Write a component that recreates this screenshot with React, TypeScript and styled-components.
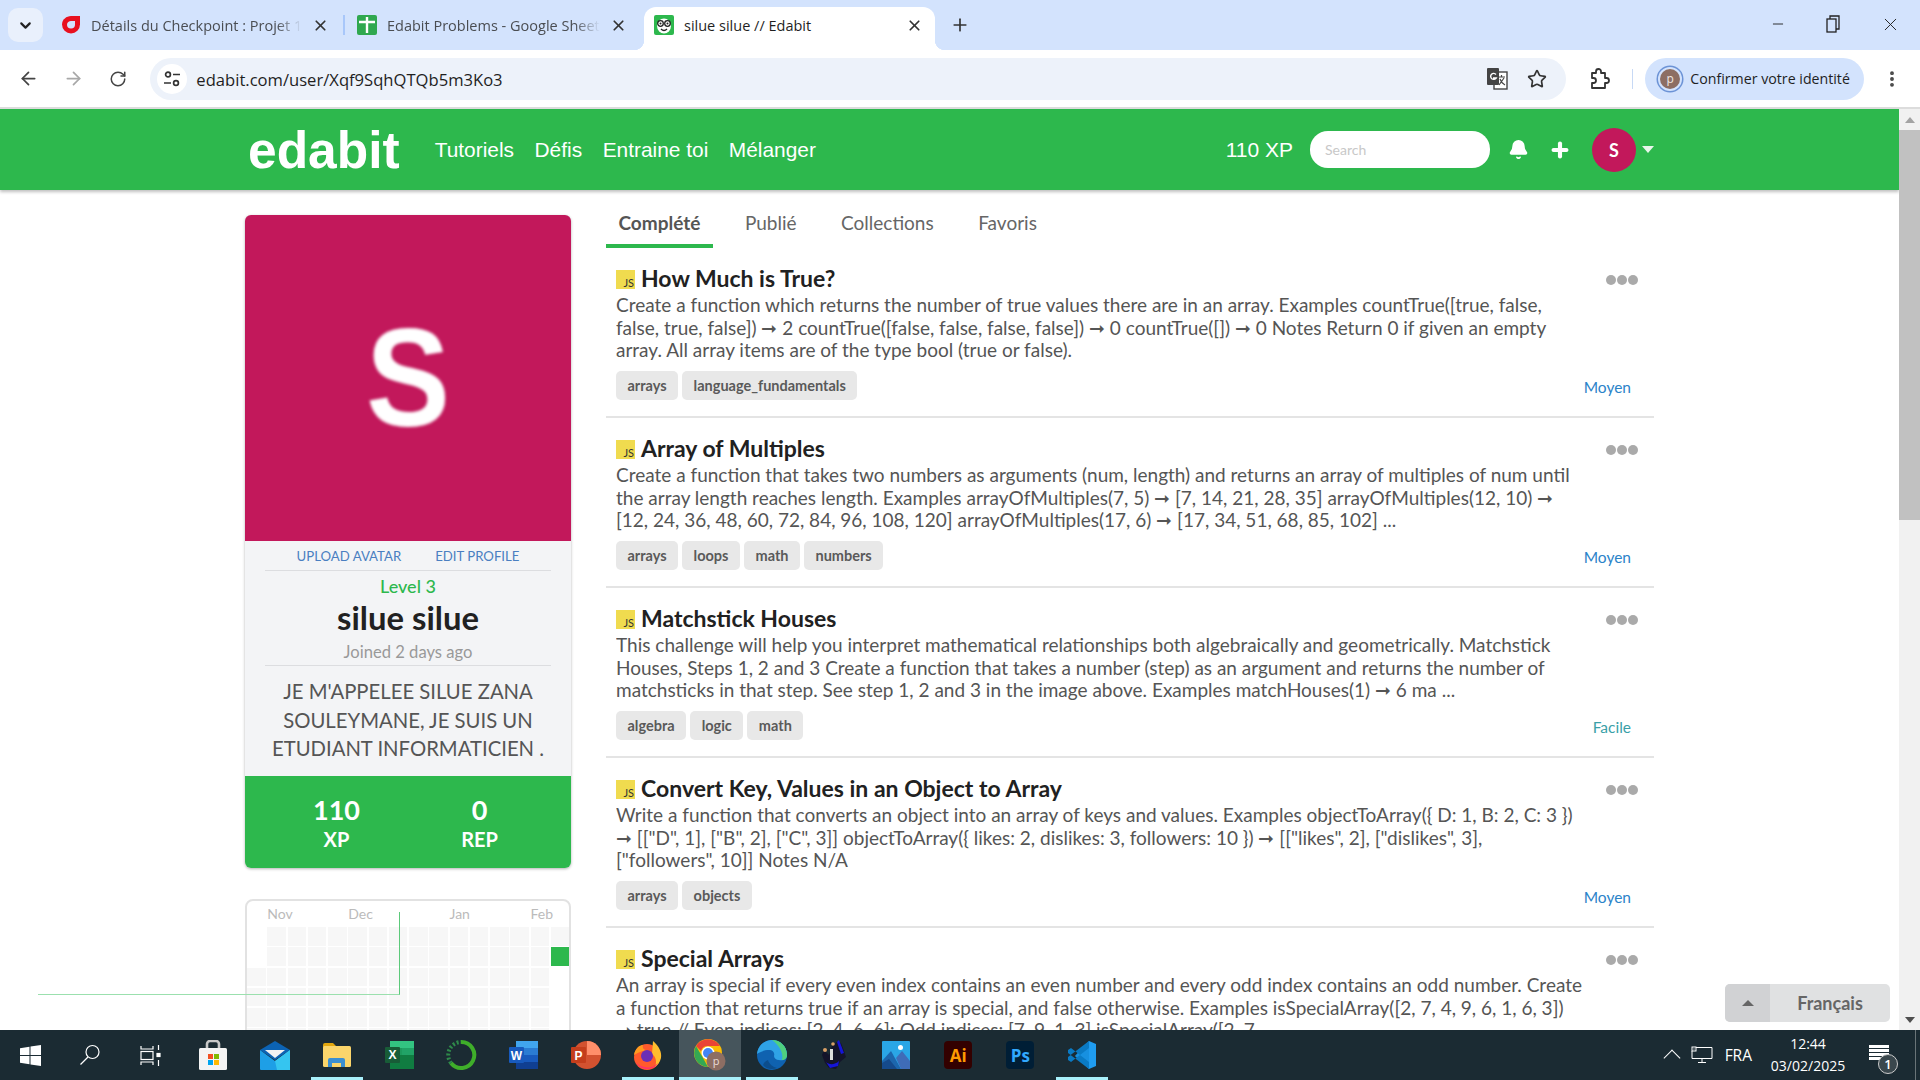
import React from 'react'
import styled, { createGlobalStyle } from 'styled-components'
import { ArrowLeft, ArrowRight, Bell, ChevronDown, EllipsisVertical, Minus, Plus, RotateCw, Star, X } from 'lucide-react'

const GREEN = '#2db84d'
const CRIMSON = '#c2185b'

const GlobalStyle = createGlobalStyle`
	html, body {
		margin: 0;
		padding: 0;
		height: 100%;
		overflow: hidden;
		background: #fff;
	}
	* {
		box-sizing: border-box;
	}
`

const problems = [
	{
		title: 'How Much is True?',
		text: 'Create a function which returns the number of true values there are in an array. Examples countTrue([true, false, false, true, false]) ➞ 2 countTrue([false, false, false, false]) ➞ 0 countTrue([]) ➞ 0 Notes Return 0 if given an empty array. All array items are of the type bool (true or false).',
		tags: ['arrays', 'language_fundamentals'],
		level: 'Moyen',
	},
	{
		title: 'Array of Multiples',
		text: 'Create a function that takes two numbers as arguments (num, length) and returns an array of multiples of num until the array length reaches length. Examples arrayOfMultiples(7, 5) ➞ [7, 14, 21, 28, 35] arrayOfMultiples(12, 10) ➞ [12, 24, 36, 48, 60, 72, 84, 96, 108, 120] arrayOfMultiples(17, 6) ➞ [17, 34, 51, 68, 85, 102] ...',
		tags: ['arrays', 'loops', 'math', 'numbers'],
		level: 'Moyen',
	},
	{
		title: 'Matchstick Houses',
		text: 'This challenge will help you interpret mathematical relationships both algebraically and geometrically. Matchstick Houses, Steps 1, 2 and 3 Create a function that takes a number (step) as an argument and returns the number of matchsticks in that step. See step 1, 2 and 3 in the image above. Examples matchHouses(1) ➞ 6 ma ...',
		tags: ['algebra', 'logic', 'math'],
		level: 'Facile',
	},
	{
		title: 'Convert Key, Values in an Object to Array',
		text: 'Write a function that converts an object into an array of keys and values. Examples objectToArray({ D: 1, B: 2, C: 3 }) ➞ [["D", 1], ["B", 2], ["C", 3]] objectToArray({ likes: 2, dislikes: 3, followers: 10 }) ➞ [["likes", 2], ["dislikes", 3], ["followers", 10]] Notes N/A',
		tags: ['arrays', 'objects'],
		level: 'Moyen',
	},
	{
		title: 'Special Arrays',
		text: 'An array is special if every even index contains an even number and every odd index contains an odd number. Create a function that returns true if an array is special, and false otherwise. Examples isSpecialArray([2, 7, 4, 9, 6, 1, 6, 3])\n➞ true // Even indices: [2, 4, 6, 6]; Odd indices: [7, 9, 1, 3] isSpecialArray([2, 7, ...',
		tags: ['arrays'],
		level: 'Moyen',
	},
]

const months = [
	{ name: 'Nov', column: 2 },
	{ name: 'Dec', column: 6 },
	{ name: 'Jan', column: 11 },
	{ name: 'Feb', column: 15 },
]

const heatCells = Array.from({ length: 7 * 16 }, (_, index) => {
	const row = Math.floor(index / 16)
	const col = index % 16
	if (col === 0 && row < 2) return 'none'
	if (col === 15 && row === 1) return 'on'
	if (col === 15 && row > 1) return 'none'
	return 'off'
})

const RestoreIcon = () => (
	<svg width="14" height="20" viewBox="0 0 14 20" fill="none" stroke="#222" strokeWidth="1.3">
		<rect x="1" y="5" width="9" height="13" fill="#d3e3fd" />
		<path d="M4 5V2h9v13h-3" />
	</svg>
)

const SiteIcon = () => (
	<svg width="18" height="18" viewBox="0 0 18 18" fill="none" stroke="#333" strokeWidth="1.7">
		<circle cx="5" cy="4.5" r="2.4" />
		<path d="M10 4.5h7M1 13h7" />
		<circle cx="13" cy="13" r="2.4" />
	</svg>
)

const TranslateIcon = () => (
	<svg width="22" height="24" viewBox="0 0 22 24">
		<rect x="8" y="5" width="13" height="17" fill="#fff" stroke="#444" strokeWidth="1.4" />
		<path d="M12 10h7M15.5 8v2M13 18l5-7M14 12c1 3 3 5 5 6" stroke="#444" strokeWidth="1.2" fill="none" />
		<rect x="1" y="1" width="12" height="17" rx="1" fill="#444" />
		<path d="M10 7.5a3 3 0 1 0 .2 3.5H7" stroke="#fff" strokeWidth="1.4" fill="none" />
	</svg>
)

const ExtensionIcon = () => (
	<svg width="22" height="22" viewBox="0 0 22 22" fill="none" stroke="#333" strokeWidth="1.8" strokeLinejoin="round">
		<path d="M4 5h4V3.500a2.500 2.500 0 0 1 5 0V5h4v5h1.500a2.500 2.500 0 0 1 0 5H17v5H4v-5h1.500a2.500 2.500 0 0 0 0-5H4z" />
	</svg>
)

const SheetsIcon = () => (
	<svg width="20" height="20" viewBox="0 0 20 20">
		<rect width="20" height="20" rx="2" fill="#2fa84f" />
		<path d="M2 7h16M10 2v16" stroke="#fff" strokeWidth="2.4" />
	</svg>
)

const CheckpointIcon = () => (
	<svg width="20" height="20" viewBox="0 0 20 20">
		<path d="M10 1h9v8.500a9 9 0 1 1-18 0C1 4.500 5.500 1 10 1z" fill="#e8101f" />
		<path d="M10 6h4v3.500a4 4 0 1 1-8 0C6 7.500 8 6 10 6z" fill="#d3e3fd" />
	</svg>
)

const EdabitFavicon = () => (
	<svg width="20" height="20" viewBox="0 0 20 20">
		<rect width="20" height="20" rx="2" fill="#2db84d" />
		<ellipse cx="10" cy="11" rx="7" ry="7.500" fill="#fff" />
		<circle cx="6.500" cy="8.500" r="2.800" fill="none" stroke="#222" strokeWidth="1.300" />
		<circle cx="13.500" cy="8.500" r="2.800" fill="none" stroke="#222" strokeWidth="1.300" />
		<circle cx="6.500" cy="8.500" r="1" fill="#222" />
		<circle cx="13.500" cy="8.500" r="1" fill="#222" />
		<path d="M7 14c2 2 4 2 6 0" stroke="#222" strokeWidth="1.300" fill="none" />
	</svg>
)

const NetworkIcon = () => (
	<svg width="22" height="18" viewBox="0 0 22 18" fill="none" stroke="#fff" strokeWidth="1">
		<path d="M5 1.500h16v11H1V5" />
		<rect x="1" y="1" width="4" height="4" />
		<path d="M2.500 3h1M11 13v3M7 16.500h8" />
	</svg>
)

const WindowsIcon = () => (
	<svg width="21" height="21" viewBox="0 0 21 21" fill="#fff">
		<path d="M0 3.200l9.500-1.400v8.200H0zM10.500 1.600L21 0v10H10.500zM0 11h9.500v8.200L0 17.800zM10.500 11H21v10l-10.500-1.600z" />
	</svg>
)

const SearchIcon = () => (
	<svg width="22" height="22" viewBox="0 0 22 22" fill="none" stroke="#fff" strokeWidth="1.200">
		<circle cx="13.500" cy="8" r="6.500" />
		<path d="M9 13L1.500 20.500" />
	</svg>
)

const TaskViewIcon = () => (
	<svg width="21" height="21" viewBox="0 0 21 21" fill="none" stroke="#fff" strokeWidth="1.200">
		<path d="M1 1v3h12V1M1 20v-3h12v3" />
		<rect x="1" y="6.500" width="12" height="8" />
		<path d="M18.500 0v5M18.500 15v6" />
		<rect x="17" y="8.500" width="3" height="3" fill="#fff" />
	</svg>
)

const StoreIcon = () => (
	<svg width="30" height="31" viewBox="0 0 30 31">
		<path d="M9 9V4a3 3 0 0 1 3-3h6a3 3 0 0 1 3 3v5" fill="none" stroke="#c8c8c8" strokeWidth="2.600" />
		<rect x="1" y="8" width="28" height="22" rx="1.500" fill="#f4f4f4" />
		<rect x="10" y="14" width="5" height="5" fill="#f25022" />
		<rect x="16" y="14" width="5" height="5" fill="#7fba00" />
		<rect x="10" y="20" width="5" height="5" fill="#00a4ef" />
		<rect x="16" y="20" width="5" height="5" fill="#ffb900" />
	</svg>
)

const MailIcon = () => (
	<svg width="30" height="29" viewBox="0 0 30 29">
		<path d="M0 9L15 0l15 9-15 10z" fill="#0c63b4" />
		<path d="M5 9h20l-10 8z" fill="#f2f2f2" />
		<path d="M0 9l15 11L30 9v19a1 1 0 0 1-1 1H1a1 1 0 0 1-1-1z" fill="#1e9fe6" />
		<path d="M30 9v20H17l-2-9z" fill="#35c5f0" />
	</svg>
)

const FolderIcon = () => (
	<svg width="28" height="24" viewBox="0 0 28 24">
		<path d="M0 2a2 2 0 0 1 2-2h8l3 3v6H0z" fill="#e3a70e" />
		<rect y="3" width="28" height="21" rx="1.500" fill="#fbd56b" />
		<path d="M5 24v-7a2 2 0 0 1 2-2h13a2 2 0 0 1 2 2v7h-4v-4H9v4z" fill="#3b8fd1" />
	</svg>
)

const ExcelIcon = () => (
	<svg width="29" height="28" viewBox="0 0 29 28">
		<rect x="5" width="24" height="28" rx="1.500" fill="#1d9a5c" />
		<rect x="5" width="24" height="7" fill="#33c481" />
		<rect x="17" y="7" width="12" height="7" fill="#21a366" />
		<rect x="5" y="14" width="24" height="14" fill="#107c41" />
		<rect y="6" width="15" height="16" rx="1" fill="#185c37" />
		<text x="7.500" y="18" textAnchor="middle" fontFamily="Liberation Sans, sans-serif" fontWeight="700" fontSize="12" fill="#fff">X</text>
	</svg>
)

const RingIcon = () => (
	<svg width="32" height="32" viewBox="0 0 32 32" fill="none">
		<path d="M16 3a13 13 0 1 1-10 21" stroke="#3fae2a" strokeWidth="4" />
		<path d="M6 24A13 13 0 0 1 16 3" stroke="#2f8a4a" strokeWidth="4" strokeDasharray="2 2" />
	</svg>
)

const WordIcon = () => (
	<svg width="29" height="28" viewBox="0 0 29 28">
		<rect x="7" width="22" height="28" rx="1.500" fill="#2b7cd3" />
		<rect x="7" width="22" height="7" fill="#41a5ee" />
		<rect x="7" y="14" width="22" height="7" fill="#185abd" />
		<rect x="7" y="21" width="22" height="7" fill="#103f91" />
		<rect y="6" width="15" height="16" rx="1" fill="#185abd" />
		<text x="7.500" y="18.500" textAnchor="middle" fontFamily="Liberation Sans, sans-serif" fontWeight="700" fontSize="12" fill="#fff">W</text>
	</svg>
)

const PowerPointIcon = () => (
	<svg width="30" height="28" viewBox="0 0 30 28">
		<circle cx="16" cy="14" r="14" fill="#d35230" />
		<path d="M16 0a14 14 0 0 1 14 14H16z" fill="#ff8f6b" />
		<rect y="6" width="15" height="16" rx="1" fill="#c43e1c" />
		<text x="7.500" y="18.500" textAnchor="middle" fontFamily="Liberation Sans, sans-serif" fontWeight="700" fontSize="12" fill="#fff">P</text>
	</svg>
)

const FirefoxIcon = () => (
	<svg width="29" height="29" viewBox="0 0 29 29">
		<circle cx="14" cy="16" r="13" fill="#ff5a2c" />
		<path d="M20 0c6 5 9 11 8 17-1 4-3 7-6 9 2-5 1-10-3-13z" fill="#ffbd2e" />
		<path d="M1 14C2 8 6 4 10 4c-1 3 1 5 4 5-6 1-9 3-13 5z" fill="#ff9a1f" />
		<circle cx="14" cy="15" r="6" fill="#6b2fb5" />
		<path d="M3 21c4 6 16 8 22 1-3 7-18 9-22-1z" fill="#ff2d70" />
	</svg>
)

const ChromeIcon = () => (
	<svg width="32" height="32" viewBox="0 0 32 32">
		<circle cx="14" cy="14" r="14" fill="#fbbc04" />
		<path d="M2 7a14 14 0 0 1 24 0H14a7 7 0 0 0-7 5z" fill="#ea4335" />
		<path d="M2 7l7 12 5 9A14 14 0 0 1 2 7z" fill="#34a853" />
		<circle cx="14" cy="14" r="6.500" fill="#fff" />
		<circle cx="14" cy="14" r="5" fill="#4285f4" />
		<circle cx="22" cy="22" r="9.500" fill="#8d6e63" />
		<text x="22" y="26" textAnchor="middle" fontFamily="Open Sans, sans-serif" fontSize="11" fill="#e8dcd8">p</text>
	</svg>
)

const EdgeIcon = () => (
	<svg width="30" height="30" viewBox="0 0 30 30">
		<circle cx="15" cy="15" r="15" fill="#0f62b0" />
		<path d="M0 14C1 5 8 0 15 0c8 0 15 6 15 15 0 4-4 6-8 5-3 0-5-2-5-4 1-3-1-6-5-6-5 0-9 2-12 4z" fill="#2fa3e6" />
		<path d="M15 0c8 0 15 6 15 15 0 3-2 5-5 5 2-7-3-15-10-20z" fill="#4fd07f" />
		<path d="M11 20c1 4 5 7 9 8-5 2-11 1-14-3 1-3 3-4 5-5z" fill="#0c4d8c" />
	</svg>
)

const FighterIcon = () => (
	<svg width="28" height="30" viewBox="0 0 28 30">
		<path d="M4 10l5 5 3-9 5-4 4 1 3 8 2 6-6 5-4 7-7-1-4-5-3-8z" fill="#14142a" />
		<path d="M19 0l5 13-3 1-4-12zM6 22c3 3 9 3 13-1l-1 5-8 2z" fill="#1515d8" />
		<circle cx="5" cy="10" r="2" fill="#d9a066" />
		<circle cx="13" cy="4" r="1.800" fill="#d9a066" />
		<path d="M10 9v11h3V9z" fill="#ddd" />
	</svg>
)

const PhotosIcon = () => (
	<svg width="28" height="28" viewBox="0 0 28 28">
		<rect width="28" height="28" rx="1" fill="#2aa6e6" />
		<circle cx="18.500" cy="6.500" r="2.500" fill="#fff" />
		<path d="M0 20l9-10 10 18H0z" fill="#1c66ad" />
		<path d="M14 17l6-7 8 10v8H19z" fill="#3f6cb8" />
		<path d="M0 28v-6l7-4 8 10z" fill="#154a8c" />
	</svg>
)

const AdobeTile = styled.div<{ $bg: string; $fg: string }>`
	width: 28px;
	height: 28px;
	display: flex;
	align-items: center;
	justify-content: center;
	border-radius: 4px;
	background: ${(p) => p.$bg};
	color: ${(p) => p.$fg};
	font: 700 17px 'Open Sans', sans-serif;
`

const VsCodeIcon = () => (
	<svg width="30" height="30" viewBox="0 0 30 30">
		<path d="M22 1l7 3v22l-7 3-14-13z" fill="#1f9cf0" />
		<path d="M22 1v28L8 16z" fill="#0a7ac4" opacity="0.35" />
		<path d="M1 10l3-2 18 14v7L1 13zM1 20l3 2L22 8V1L1 17z" fill="#0a7ac4" />
	</svg>
)

const taskbarApps = [
	{ id: 'store', icon: <StoreIcon /> },
	{ id: 'mail', icon: <MailIcon /> },
	{ id: 'files', icon: <FolderIcon />, open: true },
	{ id: 'excel', icon: <ExcelIcon /> },
	{ id: 'ring', icon: <RingIcon /> },
	{ id: 'word', icon: <WordIcon /> },
	{ id: 'ppt', icon: <PowerPointIcon /> },
	{ id: 'firefox', icon: <FirefoxIcon />, open: true },
	{ id: 'chrome', icon: <ChromeIcon />, open: true, active: true },
	{ id: 'edge', icon: <EdgeIcon />, open: true },
	{ id: 'fighter', icon: <FighterIcon /> },
	{ id: 'photos', icon: <PhotosIcon /> },
	{ id: 'ai', icon: <AdobeTile $bg="#330000" $fg="#ff9a00">Ai</AdobeTile> },
	{ id: 'ps', icon: <AdobeTile $bg="#001e36" $fg="#31a8ff">Ps</AdobeTile> },
	{ id: 'code', icon: <VsCodeIcon />, open: true },
]

export default function App() {
	return (
		<Screen>
			<GlobalStyle />
			<TabStrip>
				<TabMenu>
					<ChevronDown size={17} strokeWidth={3} color="#222" />
				</TabMenu>
				<Tab $width={301} $left={18} $right={15}>
					<CheckpointIcon />
					<TabTitle>Détails du Checkpoint : Projet 1</TabTitle>
					<TabClose size={17} strokeWidth={2.4} />
				</Tab>
				<TabDivider />
				<Tab $width={302} $left={13} $right={19}>
					<SheetsIcon />
					<TabTitle>Edabit Problems - Google Sheets</TabTitle>
					<TabClose size={17} strokeWidth={2.4} />
				</Tab>
				<ActiveTab>
					<EdabitFavicon />
					<TabTitle $active>silue silue // Edabit</TabTitle>
					<TabClose size={17} strokeWidth={2.4} />
				</ActiveTab>
				<NewTab>
					<Plus size={20} strokeWidth={2} />
				</NewTab>
				<WindowControls>
					<Minus size={16} strokeWidth={1.4} color="#222" />
					<RestoreIcon />
					<X size={21} strokeWidth={1.1} color="#222" />
				</WindowControls>
			</TabStrip>

			<Toolbar>
				<ToolButton $colour="#444"><ArrowLeft size={21} strokeWidth={2} /></ToolButton>
				<ToolButton $colour="#a8a8a8"><ArrowRight size={21} strokeWidth={2} /></ToolButton>
				<ToolButton $colour="#444"><RotateCw size={18} strokeWidth={2} /></ToolButton>
				<AddressBar>
					<SiteBadge><SiteIcon /></SiteBadge>
					<Url>edabit.com/user/Xqf9SqhQTQb5m3Ko3</Url>
					<AddressEnd>
						<TranslateIcon />
						<Star size={20} strokeWidth={2} color="#333" />
					</AddressEnd>
				</AddressBar>
				<ExtensionSlot><ExtensionIcon /></ExtensionSlot>
				<ToolbarRule />
				<IdentityPill>
					<IdentityAvatar>p</IdentityAvatar>
					Confirmer votre identité
				</IdentityPill>
				<MoreSlot><EllipsisVertical size={20} strokeWidth={2.6} color="#444" /></MoreSlot>
			</Toolbar>

			<Page>
				<Viewport>
					<Header>
						<Logo>edabit</Logo>
						<Nav>
							<NavLink>Tutoriels</NavLink>
							<NavLink>Défis</NavLink>
							<NavLink>Entraine toi</NavLink>
							<NavLink>Mélanger</NavLink>
						</Nav>
						<HeaderEnd>
							<HeaderXp>110 XP</HeaderXp>
							<SearchBox>Search</SearchBox>
							<HeaderIcon><Bell size={21} fill="#fff" color="#fff" /></HeaderIcon>
							<HeaderIcon><Plus size={22} strokeWidth={4.5} color="#fff" /></HeaderIcon>
							<UserCircle>S</UserCircle>
							<Caret />
						</HeaderEnd>
					</Header>

					<Main>
						<Sidebar>
							<ProfileCard>
								<AvatarTile><AvatarLetter>S</AvatarLetter></AvatarTile>
								<ProfileBody>
									<ProfileLinks>
										<ProfileLink>UPLOAD AVATAR</ProfileLink>
										<ProfileLink>EDIT PROFILE</ProfileLink>
									</ProfileLinks>
									<LevelText>Level 3</LevelText>
									<UserName>silue silue</UserName>
									<Joined>Joined 2 days ago</Joined>
									<Bio>JE M'APPELEE SILUE ZANA SOULEYMANE, JE SUIS UN ETUDIANT INFORMATICIEN .</Bio>
								</ProfileBody>
								<Stats>
									<Stat><StatValue>110</StatValue><StatLabel>XP</StatLabel></Stat>
									<Stat><StatValue>0</StatValue><StatLabel>REP</StatLabel></Stat>
								</Stats>
							</ProfileCard>
							<HeatCard>
								<MonthRow>
									{months.map((month) => (
										<MonthLabel key={month.name} $column={month.column}>{month.name}</MonthLabel>
									))}
								</MonthRow>
								<HeatGrid>
									{heatCells.map((state, index) => (
										<HeatCell key={index} $state={state} />
									))}
								</HeatGrid>
							</HeatCard>
						</Sidebar>

						<Content>
							<TabsRow>
								<ProfileTab $active>Complété</ProfileTab>
								<ProfileTab>Publié</ProfileTab>
								<ProfileTab>Collections</ProfileTab>
								<ProfileTab>Favoris</ProfileTab>
							</TabsRow>
							{problems.map((problem) => (
								<Problem key={problem.title}>
									<ProblemBody>
										<ProblemTitle>
											<JsBadge>JS</JsBadge>
											{problem.title}
										</ProblemTitle>
										<ProblemText>{problem.text}</ProblemText>
										<Tags>
											{problem.tags.map((tag) => (
												<TagChip key={tag}>{tag}</TagChip>
											))}
										</Tags>
									</ProblemBody>
									<ProblemSide>
										<Dots><span /><span /><span /></Dots>
										<Difficulty $easy={problem.level === 'Facile'}>{problem.level}</Difficulty>
									</ProblemSide>
								</Problem>
							))}
						</Content>
					</Main>
				</Viewport>

				<Scrollbar>
					<ScrollArrow $up />
					<ScrollThumb />
					<ScrollTrack />
					<ScrollArrow />
				</Scrollbar>

				<GuideLine />
				<LanguagePicker>
					<LanguageArrow />
					<LanguageName>Français</LanguageName>
				</LanguagePicker>
			</Page>

			<Taskbar>
				<SystemGroup>
					<SystemButton><WindowsIcon /></SystemButton>
					<SystemButton><SearchIcon /></SystemButton>
					<SystemButton><TaskViewIcon /></SystemButton>
				</SystemGroup>
				{taskbarApps.map((app) => (
					<AppButton key={app.id} $open={app.open} $active={app.active}>{app.icon}</AppButton>
				))}
				<Tray>
					<TrayChevron />
					<NetworkIcon />
					<TrayLang>FRA</TrayLang>
					<Clock>
						<span>12:44</span>
						<span>03/02/2025</span>
					</Clock>
					<Notify>
						<NotifyBubble />
						<NotifyCount>1</NotifyCount>
					</Notify>
					<ShowDesktop />
				</Tray>
			</Taskbar>
		</Screen>
	)
}

const Screen = styled.div`
	display: flex;
	flex-direction: column;
	width: 100vw;
	height: 100vh;
	overflow: hidden;
	background: #fff;
	font-family: Lato, 'Liberation Sans', sans-serif;
`

const TabStrip = styled.div`
	display: flex;
	align-items: flex-end;
	flex-shrink: 0;
	height: 50px;
	padding-left: 8px;
	background: #d3e3fd;
	position: relative;
`

const TabMenu = styled.div`
	display: flex;
	align-items: center;
	justify-content: center;
	align-self: flex-start;
	width: 35px;
	height: 34px;
	margin-top: 8px;
	border-radius: 10px;
	background: #e9f0fc;
`

const Tab = styled.div<{ $width: number; $left: number; $right: number }>`
	display: flex;
	align-items: center;
	gap: 10px;
	width: ${(p) => p.$width}px;
	height: 43px;
	padding: 0 ${(p) => p.$right}px 7px ${(p) => p.$left}px;
`

const ActiveTab = styled.div`
	display: flex;
	align-items: center;
	gap: 10px;
	width: 291px;
	height: 43px;
	margin-left: -2px;
	padding: 0 12px 7px 10px;
	background: #fff;
	border-radius: 12px 12px 0 0;
	position: relative;

	&::before,
	&::after {
		content: '';
		position: absolute;
		bottom: 0;
		width: 10px;
		height: 10px;
	}
	&::before {
		left: -10px;
		background: radial-gradient(circle at 0 0, #d3e3fd 10px, #fff 10.500px);
	}
	&::after {
		right: -10px;
		background: radial-gradient(circle at 100% 0, #d3e3fd 10px, #fff 10.500px);
	}
`

const TabTitle = styled.span<{ $active?: boolean }>`
	flex: 1;
	overflow: hidden;
	white-space: nowrap;
	font: 14.5px 'Open Sans', sans-serif;
	color: ${(p) => (p.$active ? '#1f1f1f' : '#4a4d52')};
	${(p) => !p.$active && '-webkit-mask-image: linear-gradient(90deg, #000 88%, transparent);'}
`

const TabClose = styled(X)`
	flex-shrink: 0;
	color: #333;
`

const TabDivider = styled.div`
	align-self: flex-start;
	width: 2px;
	height: 20px;
	margin-top: 15px;
	margin-left: -1px;
	margin-right: -1px;
	background: #a8c7fa;
`

const NewTab = styled.div`
	display: flex;
	align-items: center;
	align-self: flex-start;
	height: 34px;
	margin-top: 8px;
	margin-left: 15px;
	color: #333;
`

const WindowControls = styled.div`
	display: flex;
	align-items: center;
	justify-content: space-between;
	align-self: flex-start;
	width: 131px;
	height: 34px;
	margin-top: 7px;
	margin-left: auto;
	margin-right: 19px;
`

const Toolbar = styled.div`
	display: flex;
	align-items: center;
	flex-shrink: 0;
	height: 59px;
	padding-left: 6px;
	background: #fff;
	border-radius: 12px 12px 0 0;
	border-bottom: 2px solid #dcdcdc;
`

const ToolButton = styled.div<{ $colour: string }>`
	display: flex;
	align-items: center;
	justify-content: center;
	width: 45px;
	color: ${(p) => p.$colour};
`

const AddressBar = styled.div`
	display: flex;
	align-items: center;
	width: 1422px;
	height: 42px;
	margin-left: 10px;
	padding: 0 19px 0 7px;
	border-radius: 21px;
	background: #edf2fa;
`

const SiteBadge = styled.div`
	display: flex;
	align-items: center;
	justify-content: center;
	width: 30px;
	height: 30px;
	border-radius: 50%;
	background: #fff;
`

const Url = styled.span`
	margin-left: 9px;
	padding-top: 1px;
	font: 16.6px 'Open Sans', sans-serif;
	color: #1f1f1f;
`

const AddressEnd = styled.div`
	display: flex;
	align-items: center;
	gap: 19px;
	margin-left: auto;
`

const ExtensionSlot = styled.div`
	display: flex;
	justify-content: center;
	width: 67px;
`

const ToolbarRule = styled.div`
	width: 1px;
	height: 20px;
	background: #c7d9f5;
`

const IdentityPill = styled.div`
	display: flex;
	align-items: center;
	gap: 10px;
	width: 220px;
	height: 42px;
	margin-left: 12px;
	padding-left: 15px;
	border-radius: 21px;
	background: #d3e3fd;
	font: 14.2px 'Open Sans', sans-serif;
	color: #1f1f1f;
	white-space: nowrap;
`

const IdentityAvatar = styled.div`
	display: flex;
	align-items: center;
	justify-content: center;
	flex-shrink: 0;
	width: 20px;
	height: 20px;
	border-radius: 50%;
	background: #8d6e63;
	box-shadow: 0 0 0 2px #d3e3fd, 0 0 0 3.500px #6c93d6;
	font-size: 12px;
	color: #f0e6e2;
`

const MoreSlot = styled.div`
	display: flex;
	justify-content: center;
	width: 56px;
`

const Page = styled.div`
	display: flex;
	flex: 1;
	min-height: 0;
	position: relative;
`

const Viewport = styled.div`
	flex: 1;
	min-width: 0;
	overflow: hidden;
`

const Header = styled.header`
	display: flex;
	align-items: center;
	height: 81px;
	padding: 0 245px 0 248px;
	background: ${GREEN};
	box-shadow: 0 2px 3px rgba(0, 0, 0, 0.25);
	position: relative;
`

const Logo = styled.div`
	font: 700 51.500px 'Liberation Sans', Arial, sans-serif;
	color: #fff;
`

const Nav = styled.nav`
	display: flex;
	gap: 20.500px;
	margin-left: 35px;
`

const NavLink = styled.a`
	font: 20.900px 'Liberation Sans', Arial, sans-serif;
	color: #fff;
`

const HeaderEnd = styled.div`
	display: flex;
	align-items: center;
	margin-left: auto;
`

const HeaderXp = styled.span`
	font: 21px 'Liberation Sans', Arial, sans-serif;
	color: #fff;
`

const SearchBox = styled.div`
	display: flex;
	align-items: center;
	width: 180px;
	height: 37px;
	margin: 0 7px 0 17px;
	padding-left: 15px;
	border-radius: 18px;
	background: #fff;
	font-size: 14px;
	color: #c8c8c8;
`

const HeaderIcon = styled.div`
	display: flex;
	justify-content: center;
	width: 42px;
`

const UserCircle = styled.div`
	display: flex;
	align-items: center;
	justify-content: center;
	width: 44px;
	height: 44px;
	margin-left: 11px;
	border-radius: 50%;
	background: ${CRIMSON};
	font: 700 18px Lato, sans-serif;
	color: #fff;
`

const Caret = styled.div`
	width: 0;
	height: 0;
	margin-left: 6px;
	border-left: 6px solid transparent;
	border-right: 6px solid transparent;
	border-top: 7px solid #e8f6ec;
`

const Main = styled.main`
	display: flex;
	gap: 35px;
	padding: 25px 245px 0 245px;
`

const Sidebar = styled.aside`
	flex-shrink: 0;
	width: 326px;
`

const ProfileCard = styled.section`
	border-radius: 6px;
	overflow: hidden;
	background: #f3f4f6;
	box-shadow: 0 1px 3px rgba(0, 0, 0, 0.3);
`

const AvatarTile = styled.div`
	display: flex;
	align-items: center;
	justify-content: center;
	height: 326px;
	background: ${CRIMSON};
`

const AvatarLetter = styled.span`
	font: 700 126px 'Liberation Sans', Arial, sans-serif;
	color: #fff;
	filter: blur(1.5px);
	transform: scaleY(1.1);
`

const ProfileBody = styled.div`
	padding: 0 20px;
	height: 235px;
	text-align: center;
`

const ProfileLinks = styled.div`
	display: flex;
	justify-content: center;
	gap: 34px;
	height: 30px;
	line-height: 30px;
	border-bottom: 1px solid #dcdde0;
`

const ProfileLink = styled.a`
	font-size: 13.200px;
	color: #4a7fc1;
`

const LevelText = styled.div`
	margin-top: 2px;
	font-size: 18px;
	font-weight: 500;
	line-height: 26px;
	color: ${GREEN};
`

const UserName = styled.div`
	font-size: 32.800px;
	font-weight: 700;
	line-height: 38px;
	color: #212121;
`

const Joined = styled.div`
	height: 29px;
	padding-top: 4px;
	font-size: 16.600px;
	line-height: 22px;
	color: #999;
	border-bottom: 1px solid #dcdde0;
`

const Bio = styled.p`
	margin: 11px 0 0;
	font-size: 20.300px;
	line-height: 28.500px;
	color: #555;
`

const Stats = styled.div`
	display: grid;
	grid-template-columns: 1fr 1fr;
	height: 92px;
	padding: 18px 20px 0;
	background: ${GREEN};
`

const Stat = styled.div`
	text-align: center;
	color: #fff;
	font-weight: 700;
`

const StatValue = styled.div`
	font-size: 27px;
	line-height: 32px;
`

const StatLabel = styled.div`
	font-size: 20px;
	line-height: 26px;
`

const HeatCard = styled.section`
	height: 200px;
	margin-top: 31px;
	padding: 4px 0 0;
	border: 2px solid #e2e2e2;
	border-radius: 8px;
	overflow: hidden;
`

const MonthRow = styled.div`
	display: grid;
	grid-template-columns: repeat(16, 20.250px);
	height: 22px;
`

const MonthLabel = styled.span<{ $column: number }>`
	grid-column: ${(p) => p.$column} / span 3;
	grid-row: 1;
	font-size: 14px;
	line-height: 18px;
	color: #bbb;
`

const HeatGrid = styled.div`
	display: grid;
	grid-template-columns: repeat(16, 18.500px);
	grid-auto-rows: 18.500px;
	gap: 1.750px;
`

const HeatCell = styled.div<{ $state: string }>`
	background: ${(p) => (p.$state === 'on' ? GREEN : p.$state === 'off' ? '#f7f7f7' : 'transparent')};
`

const Content = styled.div`
	flex: 1;
	min-width: 0;
`

const TabsRow = styled.div`
	display: flex;
	height: 33px;
`

const ProfileTab = styled.div<{ $active?: boolean }>`
	height: 33px;
	padding: 0 12.500px;
	margin-right: 19.500px;
	font-size: 19px;
	font-weight: ${(p) => (p.$active ? 700 : 400)};
	line-height: 16px;
	color: ${(p) => (p.$active ? '#555' : '#666')};
	border-bottom: ${(p) => (p.$active ? `4px solid ${GREEN}` : '0')};
`

const Problem = styled.article`
	display: grid;
	grid-template-columns: 968px 1fr;
	height: 170px;
	padding: 16px 16px 0 10px;
	border-bottom: 2px solid #e4e4e4;
`

const ProblemBody = styled.div`
	min-width: 0;
`

const ProblemTitle = styled.h3`
	display: flex;
	align-items: center;
	height: 28px;
	margin: 0 0 2px;
	font-size: 23px;
	font-weight: 700;
	color: #212121;
`

const JsBadge = styled.span`
	display: flex;
	align-items: flex-end;
	justify-content: flex-end;
	width: 19px;
	height: 19px;
	margin: 3px 6px 0 0;
	padding: 0 1px 1px 0;
	background: #f0db4f;
	font-size: 11px;
	font-weight: 400;
	line-height: 10px;
	color: #333;
`

const ProblemText = styled.p`
	height: 68px;
	margin: 0;
	overflow: hidden;
	white-space: pre-line;
	font-size: 19px;
	line-height: 22.500px;
	color: #555;
`

const Tags = styled.div`
	display: flex;
	gap: 4px;
	margin-top: 9px;
`

const TagChip = styled.span`
	height: 29px;
	padding: 0 11.500px;
	border-radius: 5px;
	background: #e8e8e8;
	font-size: 14.500px;
	font-weight: 700;
	line-height: 29px;
	color: #5a5a5a;
`

const ProblemSide = styled.div`
	display: flex;
	flex-direction: column;
	justify-content: space-between;
	align-items: flex-end;
	min-width: 0;
	height: 133px;
`

const Dots = styled.div`
	display: flex;
	gap: 1px;
	height: 32px;
	align-items: center;

	span {
		width: 10px;
		height: 10px;
		border-radius: 50%;
		background: #aaa;
	}
`

const Difficulty = styled.span<{ $easy?: boolean }>`
	margin-right: 7px;
	font-size: 15.500px;
	line-height: 20px;
	white-space: nowrap;
	color: ${(p) => (p.$easy ? '#3a9fa8' : '#2b83c9')};
`

const Scrollbar = styled.div`
	display: flex;
	flex-direction: column;
	flex-shrink: 0;
	width: 21px;
	background: #f1f1f1;
`

const ScrollArrow = styled.div<{ $up?: boolean }>`
	flex-shrink: 0;
	height: 21px;
	display: flex;
	align-items: center;
	justify-content: center;

	&::after {
		content: '';
		border-left: 5px solid transparent;
		border-right: 5px solid transparent;
		${(p) => (p.$up ? 'border-bottom: 6px solid #a3a3a3;' : 'border-top: 6px solid #505050;')}
	}
`

const ScrollThumb = styled.div`
	flex-shrink: 0;
	height: 390px;
	background: #c1c1c1;
`

const ScrollTrack = styled.div`
	flex: 1;
`

const GuideLine = styled.div`
	position: absolute;
	left: 38px;
	top: 803px;
	width: 362px;
	height: 83px;
	border-right: 1px solid #5cc97a;
	border-bottom: 1px solid #9be0ae;
`

const LanguagePicker = styled.div`
	position: absolute;
	right: 30px;
	bottom: 8px;
	display: flex;
	width: 165px;
	height: 38px;
	border-radius: 5px;
	overflow: hidden;
	background: #e0e1e2;
`

const LanguageArrow = styled.div`
	display: flex;
	align-items: center;
	justify-content: center;
	width: 45px;
	background: #d1d2d4;

	&::after {
		content: '';
		border-left: 6px solid transparent;
		border-right: 6px solid transparent;
		border-bottom: 6px solid #666;
	}
`

const LanguageName = styled.div`
	flex: 1;
	text-align: center;
	font-size: 18px;
	font-weight: 700;
	line-height: 38px;
	color: #666;
`

const Taskbar = styled.div`
	display: flex;
	flex-shrink: 0;
	height: 50px;
	background: #1b2b33;
`

const SystemGroup = styled.div`
	display: flex;
	margin-right: 2px;
`

const SystemButton = styled.div`
	display: flex;
	align-items: center;
	justify-content: center;
	width: 60px;
`

const AppButton = styled.div<{ $open?: boolean; $active?: boolean }>`
	display: flex;
	align-items: center;
	justify-content: center;
	width: 62.100px;
	background: ${(p) => (p.$active ? '#46555c' : 'transparent')};
	position: relative;

	${(p) =>
		p.$open &&
		`&::after {
			content: '';
			position: absolute;
			left: 5px;
			right: 5px;
			bottom: 0;
			height: 3px;
			background: #a8f0fb;
		}`}
	${(p) => p.$active && '&::after { left: 0; right: 0; }'}
`

const Tray = styled.div`
	display: flex;
	align-items: center;
	margin-left: auto;
	color: #fff;
	font-family: 'Open Sans', sans-serif;
`

const TrayChevron = styled.div`
	width: 12px;
	height: 12px;
	margin-top: 6px;
	margin-right: 13px;
	border-left: 1.300px solid #fff;
	border-top: 1.300px solid #fff;
	transform: rotate(45deg);
`

const TrayLang = styled.span`
	margin-left: 12px;
	font-size: 15.500px;
`

const Clock = styled.div`
	display: flex;
	flex-direction: column;
	align-items: center;
	width: 92px;
	margin-left: 10px;
	gap: 2px;
	font-size: 14px;
	line-height: 20px;
`

const Notify = styled.div`
	width: 47px;
	height: 50px;
	margin-left: 14px;
	position: relative;
`

const NotifyBubble = styled.div`
	position: absolute;
	left: 1px;
	top: 15px;
	width: 20px;
	height: 16px;
	background: repeating-linear-gradient(#fff 0 3px, #1b2b33 3px 4px);
`

const NotifyCount = styled.div`
	position: absolute;
	left: 10px;
	top: 24px;
	width: 20px;
	height: 20px;
	border: 1px solid #ccc;
	border-radius: 50%;
	background: #3a474d;
	font-size: 13px;
	font-weight: 600;
	line-height: 18px;
	text-align: center;
`

const ShowDesktop = styled.div`
	width: 5px;
	height: 50px;
	border-left: 1px solid #6a7478;
`
